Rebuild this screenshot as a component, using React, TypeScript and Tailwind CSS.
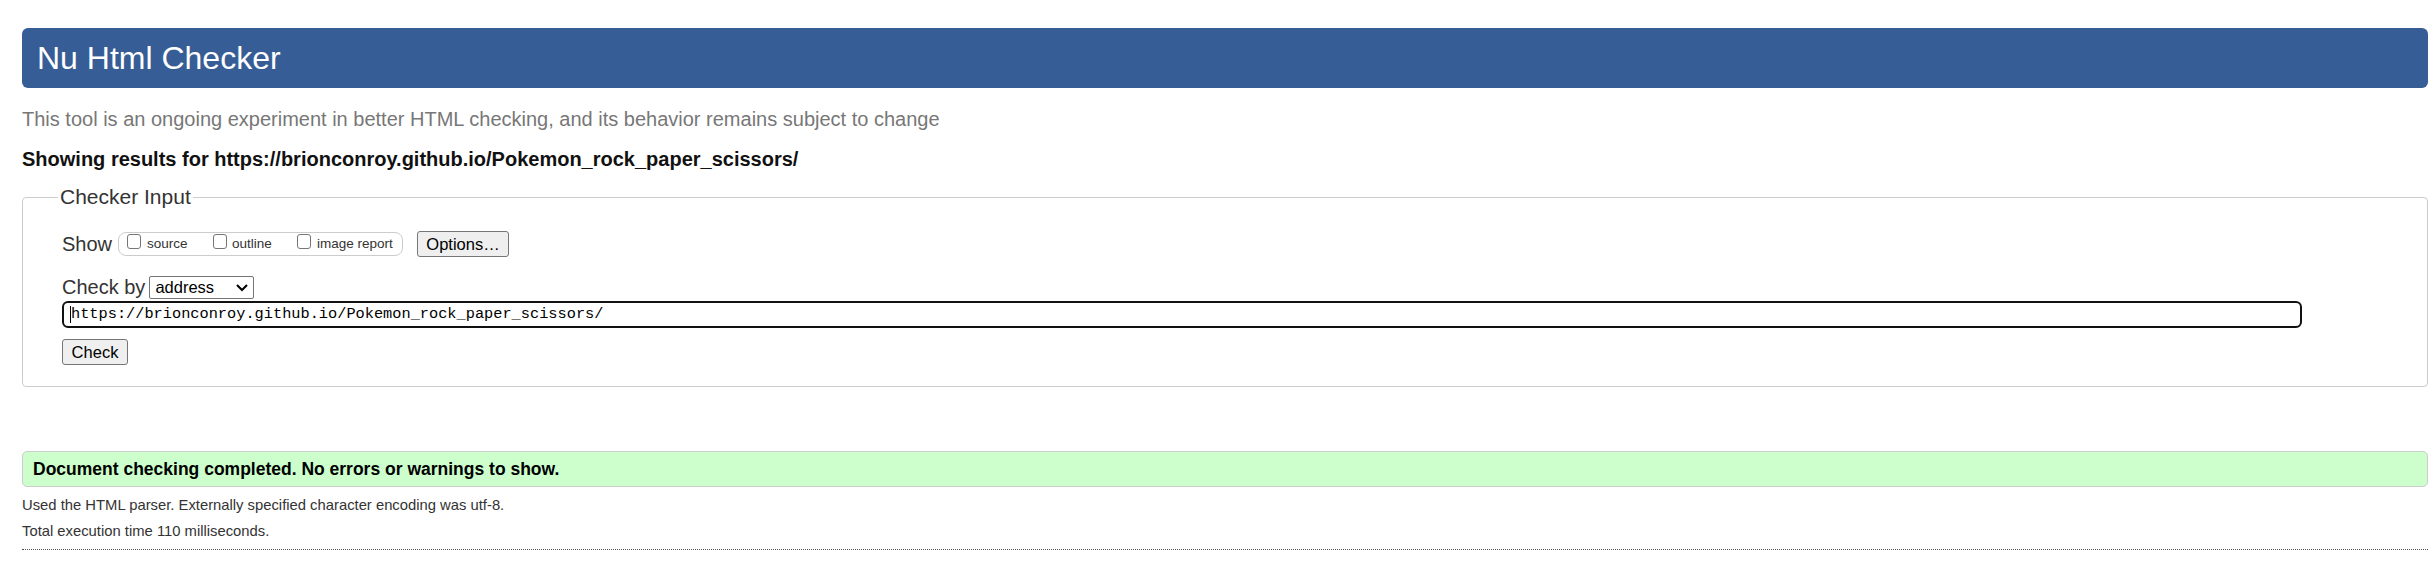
import React from "react";

const Box = () => (
  <span className="inline-block w-[14px] h-[15px] border border-[#767676] rounded-[3px] bg-white self-start mt-[1px]" />
);

const App = () => {
  return (
    <div className="min-h-screen bg-white pl-[22px] pr-[3px] pt-[28px] font-['Liberation_Sans',Arial,sans-serif] text-[#222]">
      {/* Header */}
      <div className="h-[60px] rounded-[6px] bg-[#365d95] flex items-center pl-[15px]">
        <h1 className="text-[32px] text-white leading-none">Nu Html Checker</h1>
      </div>

      <p className="mt-[20px] text-[20px] leading-[23px] text-[#777]">
        This tool is an ongoing experiment in better HTML checking, and its behavior remains subject to change
      </p>
      <p className="mt-[17px] text-[20px] leading-[23px] font-bold text-[#111]">
        Showing results for https://brionconroy.github.io/Pokemon_rock_paper_scissors/
      </p>

      {/* Checker input */}
      <fieldset className="mt-[14px] border border-[#ccc] rounded-[4px]">
        <legend className="ml-[35px] px-[2px] text-[21px] leading-[24px] text-[#333]">Checker Input</legend>

        <div className="pl-[39px] pb-[21px]">
          <div className="mt-[22px] flex items-center h-[26px]">
            <span className="text-[20px] text-[#333] mr-[6px]">Show</span>
            <div className="flex items-center h-[24px] border border-[#ccc] rounded-[8px] pl-[8px] pr-[7px] w-[285px]">
              <Box />
              <span className="ml-[6px] text-[13.5px] text-[#333] w-[66px]">source</span>
              <Box />
              <span className="ml-[5px] text-[13.5px] text-[#333] w-[65px]">outline</span>
              <Box />
              <span className="ml-[6px] text-[13.5px] text-[#333]">image report</span>
            </div>
            <button className="ml-[14px] h-[26px] w-[92px] border border-[#767676] rounded-[3px] bg-[#efefef] text-[16.5px] text-black">
              Options…
            </button>
          </div>

          <div className="mt-[18px] flex items-center h-[24px]">
            <span className="text-[20px] text-[#333] mr-[4px]">Check by</span>
            <div className="flex items-center justify-between w-[105px] h-[23px] border border-[#767676] rounded-[2px] pl-[5px] pr-[3px] text-[16.5px] text-black">
              <span>address</span>
              <svg width="14" height="10" viewBox="0 0 14 10" className="mr-[1px]">
                <path d="M2 3 L7 8 L12 3" fill="none" stroke="#000" strokeWidth="2" />
              </svg>
            </div>
          </div>

          <div className="mt-[2px] mr-[125px] h-[27px] border-2 border-[#111] rounded-[6px] flex items-center pl-[6px]">
            <span className="w-[1px] h-[17px] bg-black" />
            <span className="font-['Liberation_Mono','Courier_New',monospace] text-[15.3px] text-black leading-none">
              https://brionconroy.github.io/Pokemon_rock_paper_scissors/
            </span>
          </div>

          <button className="mt-[11px] h-[26px] w-[66px] border border-[#767676] rounded-[3px] bg-[#efefef] text-[16.5px] text-black">
            Check
          </button>
        </div>
      </fieldset>

      {/* Result */}
      <div className="mt-[64px] h-[36px] rounded-[5px] border border-[#ccc] bg-[#ccffcc] flex items-center pl-[10px]">
        <span className="text-[17.5px] font-bold text-black">Document checking completed. No errors or warnings to show.</span>
      </div>
      <p className="mt-[8px] text-[14.8px] leading-[20px] text-[#333]">
        Used the HTML parser. Externally specified character encoding was utf-8.
      </p>
      <p className="mt-[6px] text-[14.8px] leading-[20px] text-[#333]">Total execution time 110 milliseconds.</p>
      <div className="mt-[8px] border-t border-dotted border-[#555]" />
    </div>
  );
};

export default App;
